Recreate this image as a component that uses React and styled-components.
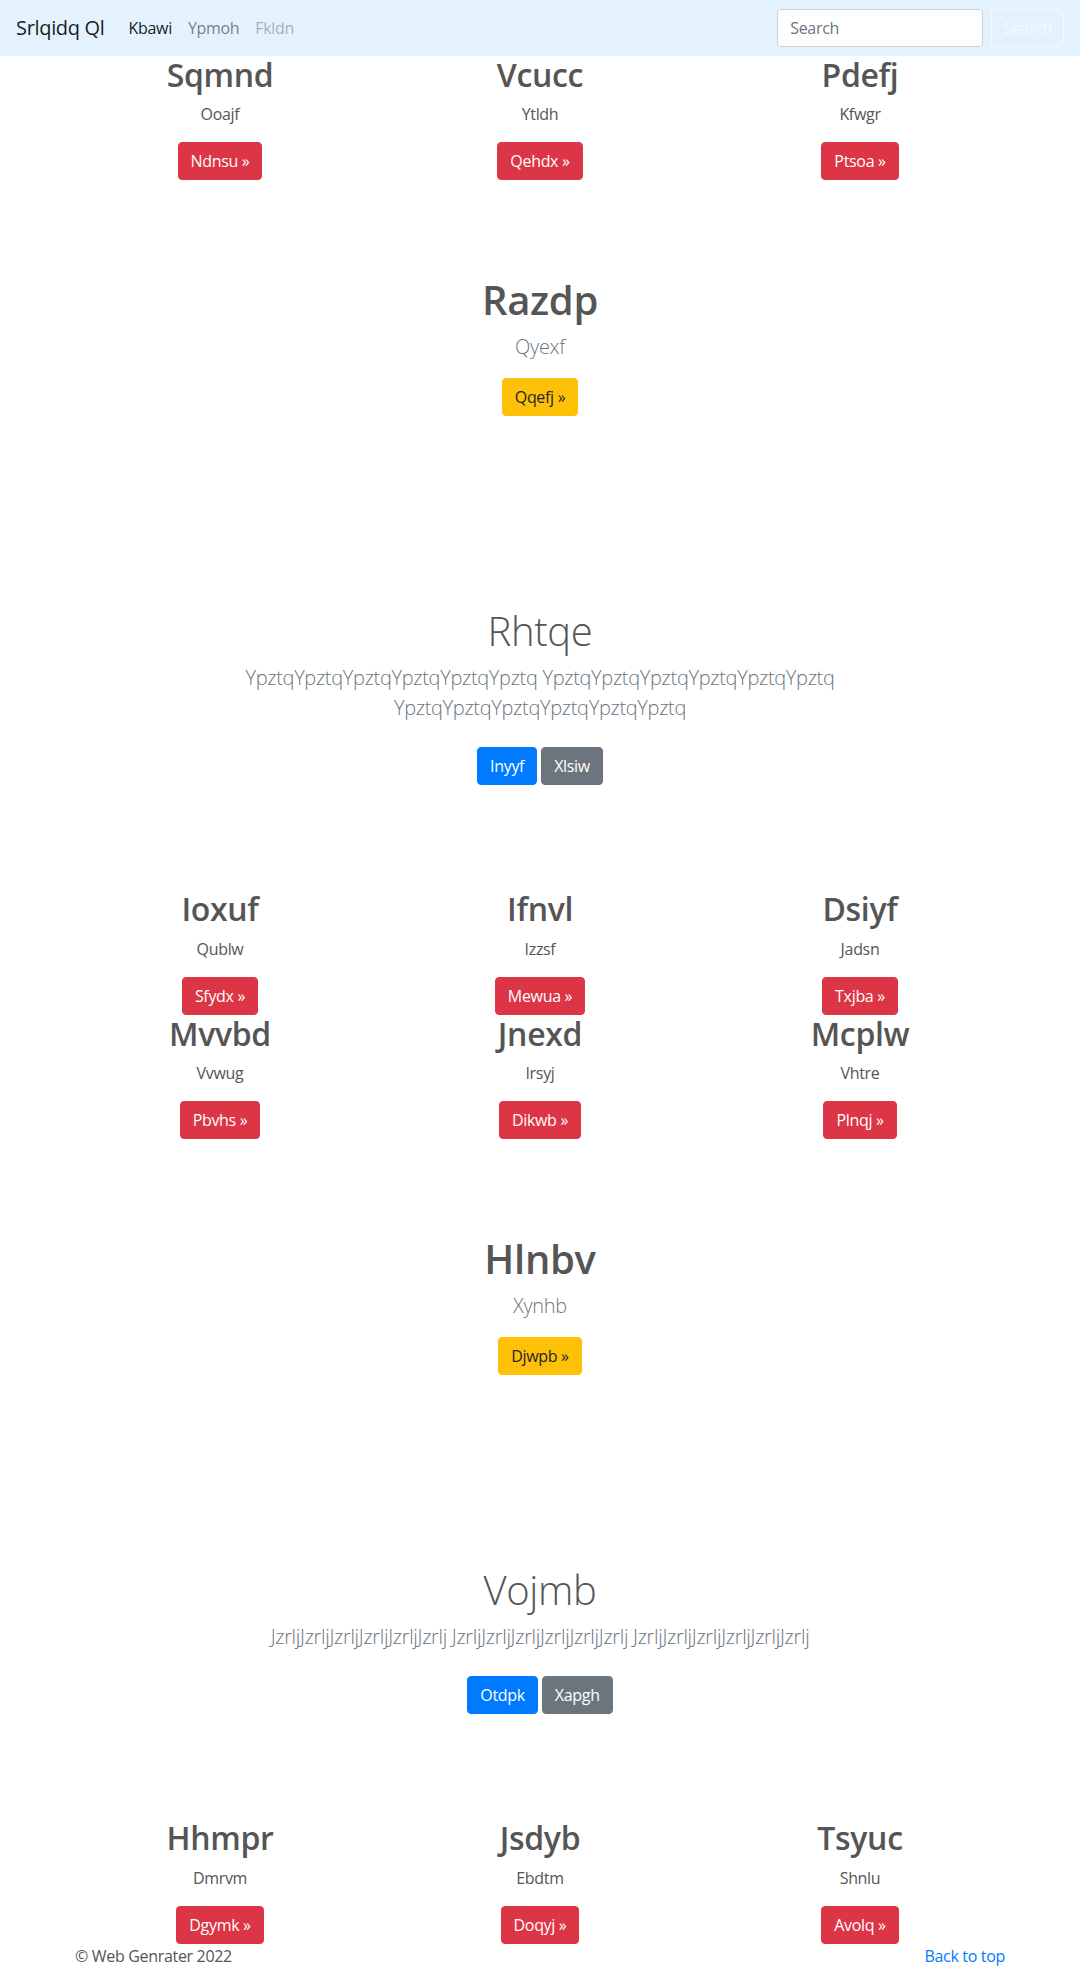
import React from 'react'
import styled, { createGlobalStyle, css } from 'styled-components'

const GlobalStyle = createGlobalStyle`
    * { box-sizing: border-box; }
    body {
        margin: 0;
        background: #fff;
        color: #555;
        font-family: "Open Sans", "Noto Sans", sans-serif;
        font-size: 16px;
        line-height: 1.5;
        letter-spacing: -0.02em;
    }
`;

const cardsTop = [
    ['Sqmnd', 'Ooajf', 'Ndnsu'],
    ['Vcucc', 'Ytldh', 'Qehdx'],
    ['Pdefj', 'Kfwgr', 'Ptsoa'],
];

const cardsMiddle = [
    ['Ioxuf', 'Qublw', 'Sfydx'],
    ['Ifnvl', 'Izzsf', 'Mewua'],
    ['Dsiyf', 'Jadsn', 'Txjba'],
    ['Mvvbd', 'Vvwug', 'Pbvhs'],
    ['Jnexd', 'Irsyj', 'Dikwb'],
    ['Mcplw', 'Vhtre', 'Plnqj'],
];

const cardsBottom = [
    ['Hhmpr', 'Dmrvm', 'Dgymk'],
    ['Jsdyb', 'Ebdtm', 'Doqyj'],
    ['Tsyuc', 'Shnlu', 'Avolq'],
];

const repeatWord = (w) => Array(6).fill(w).join('');
const repeatText = (w) => [1, 2, 3].map(() => repeatWord(w)).join(' ');

const CardGrid = ({ items, space }) => (
    <Container $space={space}>
        <Grid>
            {items.map(([title, text, label]) => (
                <Card key={title}>
                    <CardTitle>{title}</CardTitle>
                    <CardText>{text}</CardText>
                    <Button $variant="danger">{label} &raquo;</Button>
                </Card>
            ))}
        </Grid>
    </Container>
);

const App = () => {
    return (
        <>
            <GlobalStyle />
            <Navbar>
                <Brand>Srlqidq Ql</Brand>
                <NavList>
                    <NavLink $state="active">Kbawi</NavLink>
                    <NavLink>Ypmoh</NavLink>
                    <NavLink $state="disabled">Fkldn</NavLink>
                </NavList>
                <SearchForm>
                    <SearchInput placeholder="Search" />
                    <SearchButton>Search</SearchButton>
                </SearchForm>
            </Navbar>

            <CardGrid items={cardsTop} space={0} />

            <Feature $space={96}>
                <FeatureTitle>Razdp</FeatureTitle>
                <Lead>Qyexf</Lead>
                <Button $variant="warning">Qqefj &raquo;</Button>
            </Feature>

            <Feature $space={191}>
                <FeatureTitle $light>Rhtqe</FeatureTitle>
                <Lead $gap={24}>{repeatText('Ypztq')}</Lead>
                <ButtonRow>
                    <Button $variant="primary">Inyyf</Button>
                    <Button $variant="secondary">Xlsiw</Button>
                </ButtonRow>
            </Feature>

            <CardGrid items={cardsMiddle} space={105} />

            <Feature $space={96}>
                <FeatureTitle>Hlnbv</FeatureTitle>
                <Lead>Xynhb</Lead>
                <Button $variant="warning">Djwpb &raquo;</Button>
            </Feature>

            <Feature $space={191}>
                <FeatureTitle $light>Vojmb</FeatureTitle>
                <Lead $gap={24}>{repeatText('Jzrlj')}</Lead>
                <ButtonRow>
                    <Button $variant="primary">Otdpk</Button>
                    <Button $variant="secondary">Xapgh</Button>
                </ButtonRow>
            </Feature>

            <CardGrid items={cardsBottom} space={105} />

            <Footer>
                <span>&copy; Web Genrater 2022</span>
                <FooterLink href="#">Back to top</FooterLink>
            </Footer>
        </>
    )
}

const Navbar = styled.nav`
    display: flex;
    align-items: center;
    height: 56px;
    padding: 8px 16px;
    background-color: #e3f2fd;
`;

const Brand = styled.a`
    font-size: 20px;
    line-height: 30px;
    padding: 5px 0;
    margin-right: 16px;
    color: rgba(0, 0, 0, 0.9);
`;

const NavList = styled.div`
    display: flex;
`;

const navColors = {
    active: 'rgba(0, 0, 0, 0.9)',
    disabled: 'rgba(0, 0, 0, 0.3)',
};

const NavLink = styled.a`
    padding: 8px;
    color: ${(p) => navColors[p.$state] || 'rgba(0, 0, 0, 0.5)'};
`;

const SearchForm = styled.form`
    display: flex;
    gap: 8px;
    margin-left: auto;
`;

const SearchInput = styled.input`
    width: 206px;
    height: 38px;
    padding: 6px 12px;
    border: 1px solid #ced4da;
    border-radius: 4px;
    font-family: inherit;
    font-size: 16px;
    letter-spacing: inherit;
    color: #495057;
    background: #fff;
    &::placeholder { color: #6c757d; }
`;

const SearchButton = styled.button`
    height: 38px;
    padding: 6px 11px;
    border: 1px solid #f8f9fa;
    border-radius: 4px;
    background: transparent;
    color: #f8f9fa;
    font-family: inherit;
    font-size: 16px;
    letter-spacing: inherit;
`;

const Container = styled.section`
    max-width: 960px;
    margin: ${(p) => p.$space}px auto 0;
    padding: 0 15px;
`;

const Grid = styled.div`
    display: grid;
    grid-template-columns: repeat(3, 1fr);
    margin: 0 -15px;
`;

const Card = styled.div`
    padding: 0 15px;
    text-align: center;
`;

const CardTitle = styled.h2`
    margin: 0 0 8px;
    font-size: 32px;
    font-weight: 600;
    line-height: 1.2;
    color: #555;
`;

const CardText = styled.p`
    margin: 0 0 16px;
    color: #555;
`;

const variants = {
    danger: css`background: #dc3545; border-color: #dc3545; color: #fff;`,
    warning: css`background: #ffc107; border-color: #ffc107; color: #212529;`,
    primary: css`background: #007bff; border-color: #007bff; color: #fff;`,
    secondary: css`background: #6c757d; border-color: #6c757d; color: #fff;`,
};

const Button = styled.a`
    display: inline-block;
    padding: 6px 12px;
    border: 1px solid transparent;
    border-radius: 4px;
    font-size: 16px;
    line-height: 24px;
    vertical-align: top;
    ${(p) => variants[p.$variant]}
`;

const Feature = styled.section`
    max-width: 960px;
    margin: ${(p) => p.$space}px auto 0;
    padding: 0 15px;
    text-align: center;
`;

const FeatureTitle = styled.h1`
    margin: 0 0 8px;
    font-size: 40px;
    font-weight: ${(p) => (p.$light ? 300 : 600)};
    line-height: 1.2;
    color: #555;
`;

const Lead = styled.p`
    max-width: 700px;
    margin: 0 auto ${(p) => p.$gap || 16}px;
    font-size: 20px;
    font-weight: 300;
    line-height: 30px;
    color: #6c757d;
`;

const ButtonRow = styled.div`
    display: flex;
    justify-content: center;
    gap: 4px;
`;

const Footer = styled.footer`
    display: flex;
    justify-content: space-between;
    max-width: 960px;
    margin: 0 auto;
    padding: 0 15px;
    color: #555;
`;

const FooterLink = styled.a`
    color: #007bff;
    text-decoration: none;
`;

export default App;
